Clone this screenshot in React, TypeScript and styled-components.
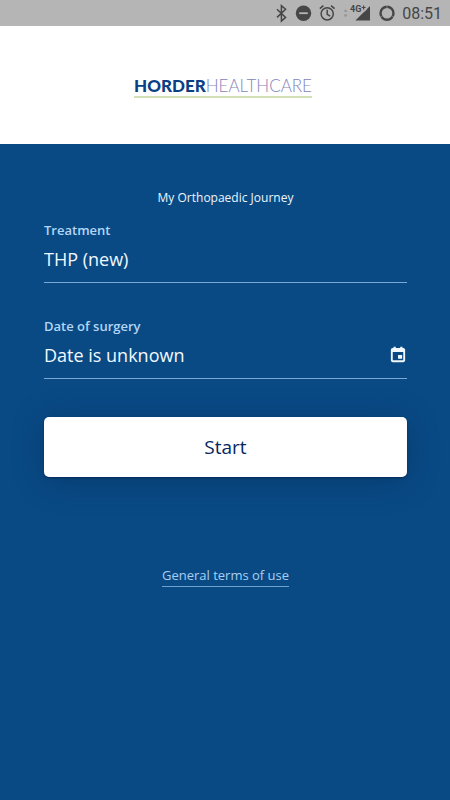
import React from "react";
import styled, { createGlobalStyle } from "styled-components";

const GlobalStyle = createGlobalStyle`
  *, *::before, *::after { box-sizing: border-box; }
  html, body { margin: 0; background: #094a85; }
  body { font-family: "Open Sans", "Noto Sans", sans-serif; }
`;

const Screen = styled.div`
  min-height: 100vh;
  display: flex;
  flex-direction: column;
  background: #094a85;
`;

const StatusBar = styled.div`
  height: 26px;
  padding: 0 8px 0 0;
  display: flex;
  align-items: center;
  justify-content: flex-end;
  background: #b5b5b5;
  color: #464646;
`;

const StatusIcons = styled.svg`
  display: block;
  width: 124px;
  height: 26px;
`;

const Clock = styled.time`
  margin-left: 4px;
  padding-top: 2px;
  font-family: Roboto, sans-serif;
  font-size: 16px;
  line-height: 24px;
`;

const Header = styled.header`
  height: 118px;
  padding: 4px 4px 0 0;
  display: flex;
  align-items: center;
  justify-content: center;
  background: #ffffff;
`;

const Logo = styled.div`
  display: flex;
  border-bottom: 2px solid #d3dfb4;
  font-family: Lato, sans-serif;
  font-size: 17px;
  line-height: 20px;
  font-weight: 300;
  color: #8384ba;
`;

const LogoStrong = styled.strong`
  font-weight: 900;
  color: #0b3f85;
`;

const Main = styled.main`
  padding: 44px 43px 24px 44px;
  display: flex;
  flex-direction: column;
`;

const Title = styled.h1`
  margin: 0 0 12px;
  font-size: 12px;
  line-height: 20px;
  font-weight: 400;
  text-align: center;
  color: #eef5fc;
`;

const Form = styled.form`
  display: flex;
  flex-direction: column;
`;

const Field = styled.div`
  margin-bottom: 33px;
  display: flex;
  flex-direction: column;
  border-bottom: 1px solid #79a9d6;
`;

const Label = styled.label`
  margin-bottom: 5px;
  font-size: 13px;
  line-height: 20px;
  font-weight: 600;
  color: #b3d6f5;
`;

const FieldRow = styled.div`
  height: 37px;
  padding-bottom: 10px;
  display: flex;
  align-items: center;
`;

const controlStyle = `
  flex: 1;
  min-width: 0;
  height: 28px;
  margin: 0;
  padding: 0;
  border: 0;
  border-radius: 0;
  outline-offset: 2px;
  appearance: none;
  background: transparent;
  color: #f1f8fe;
  font-family: inherit;
  font-size: 18px;
  line-height: 28px;
`;

const Select = styled.select`
  ${controlStyle}
`;

const Input = styled.input`
  ${controlStyle}
`;

const IconButton = styled.button`
  padding: 0;
  border: 0;
  display: flex;
  background: transparent;
  color: #f1f8fe;
  cursor: pointer;
`;

const StartButton = styled.button`
  height: 60px;
  margin-top: 5px;
  border: 0;
  border-radius: 5px;
  background: #ffffff;
  color: #06285f;
  font-family: inherit;
  font-size: 19px;
  line-height: 28px;
  font-weight: 500;
  box-shadow: 0 1px 2px rgba(0, 20, 60, 0.5), 0 4px 32px rgba(0, 20, 50, 0.28);
  cursor: pointer;
`;

const TermsLink = styled.a`
  margin-top: 88px;
  align-self: center;
  border-bottom: 1px solid #6ea0d0;
  font-size: 13px;
  line-height: 21px;
  color: #a9cff2;
  text-decoration: none;
`;

function StatusGlyphs() {
  return (
    <StatusIcons viewBox="274 0 124 26" role="img" aria-label="Bluetooth, do not disturb, alarm, 4G+ signal, data">
      <path d="M277 9.2 285.6 17.4 281.4 21V5.6L285.6 9.2 277 17.4" fill="none" stroke="currentColor" strokeWidth="1.5" />
      <circle cx="303.5" cy="13.2" r="7.7" fill="currentColor" />
      <path d="M299.2 13.2h8.600" stroke="#b5b5b5" strokeWidth="1.8" />
      <g fill="none" stroke="currentColor" strokeWidth="1.5">
        <circle cx="327.2" cy="13.8" r="6.1" />
        <path d="M327.2 9.8v4.5l3 1.8M319.8 8.7l3.6-3M334.6 8.7l-3.6-3" />
      </g>
      <path d="M343.6 11.8l2-2.6 2 2.6zM343.6 14.6l2 2.6 2-2.6z" fill="#929292" />
      <path d="M370 6V20.6H355.4z" fill="currentColor" />
      <path d="M349 3H366.5V10L363 12.6H349z" fill="#b5b5b5" />
      <text x="350" y="12" fontFamily="Roboto, sans-serif" fontSize="9" fontWeight="700" fill="currentColor">4G</text>
      <path d="M361.6 7.5h4M363.6 5.5v4" stroke="currentColor" strokeWidth="1.1" />
      <circle cx="387" cy="13.2" r="6.5" fill="none" stroke="currentColor" strokeWidth="2.4" />
      <path d="M387 5v3.5M379.7 17.5l3-1.8M394.3 17.5l-3-1.8" stroke="#b5b5b5" strokeWidth="0.5" />
    </StatusIcons>
  );
}

function CalendarIcon() {
  return (
    <svg width="18" height="18" viewBox="0 0 24 24" fill="currentColor" aria-hidden="true">
      <path
        fillRule="evenodd"
        d="M5 2.5h1V1h3v1.500h6V1h3v1.500h1c1.400 0 2.500 1.100 2.500 2.500v14c0 1.400-1.100 2.500-2.500 2.500H5c-1.400 0-2.500-1.100-2.500-2.500V5c0-1.400 1.100-2.500 2.500-2.500zM5 8v11h14V8zM12 12h5.500v5H12z"
      />
    </svg>
  );
}

export default function App() {
  return (
    <Screen>
      <GlobalStyle />
      <StatusBar>
        <StatusGlyphs />
        <Clock>08:51</Clock>
      </StatusBar>
      <Header>
        <Logo>
          <LogoStrong>HORDER</LogoStrong>
          <span>HEALTHCARE</span>
        </Logo>
      </Header>
      <Main>
        <Title>My Orthopaedic Journey</Title>
        <Form onSubmit={(event) => event.preventDefault()}>
          <Field>
            <Label htmlFor="treatment">Treatment</Label>
            <FieldRow>
              <Select id="treatment">
                <option>THP (new)</option>
              </Select>
            </FieldRow>
          </Field>
          <Field>
            <Label htmlFor="surgery-date">Date of surgery</Label>
            <FieldRow>
              <Input id="surgery-date" type="text" defaultValue="Date is unknown" />
              <IconButton type="button" aria-label="Choose date">
                <CalendarIcon />
              </IconButton>
            </FieldRow>
          </Field>
          <StartButton type="submit">Start</StartButton>
        </Form>
        <TermsLink href="#terms">General terms of use</TermsLink>
      </Main>
    </Screen>
  );
}
